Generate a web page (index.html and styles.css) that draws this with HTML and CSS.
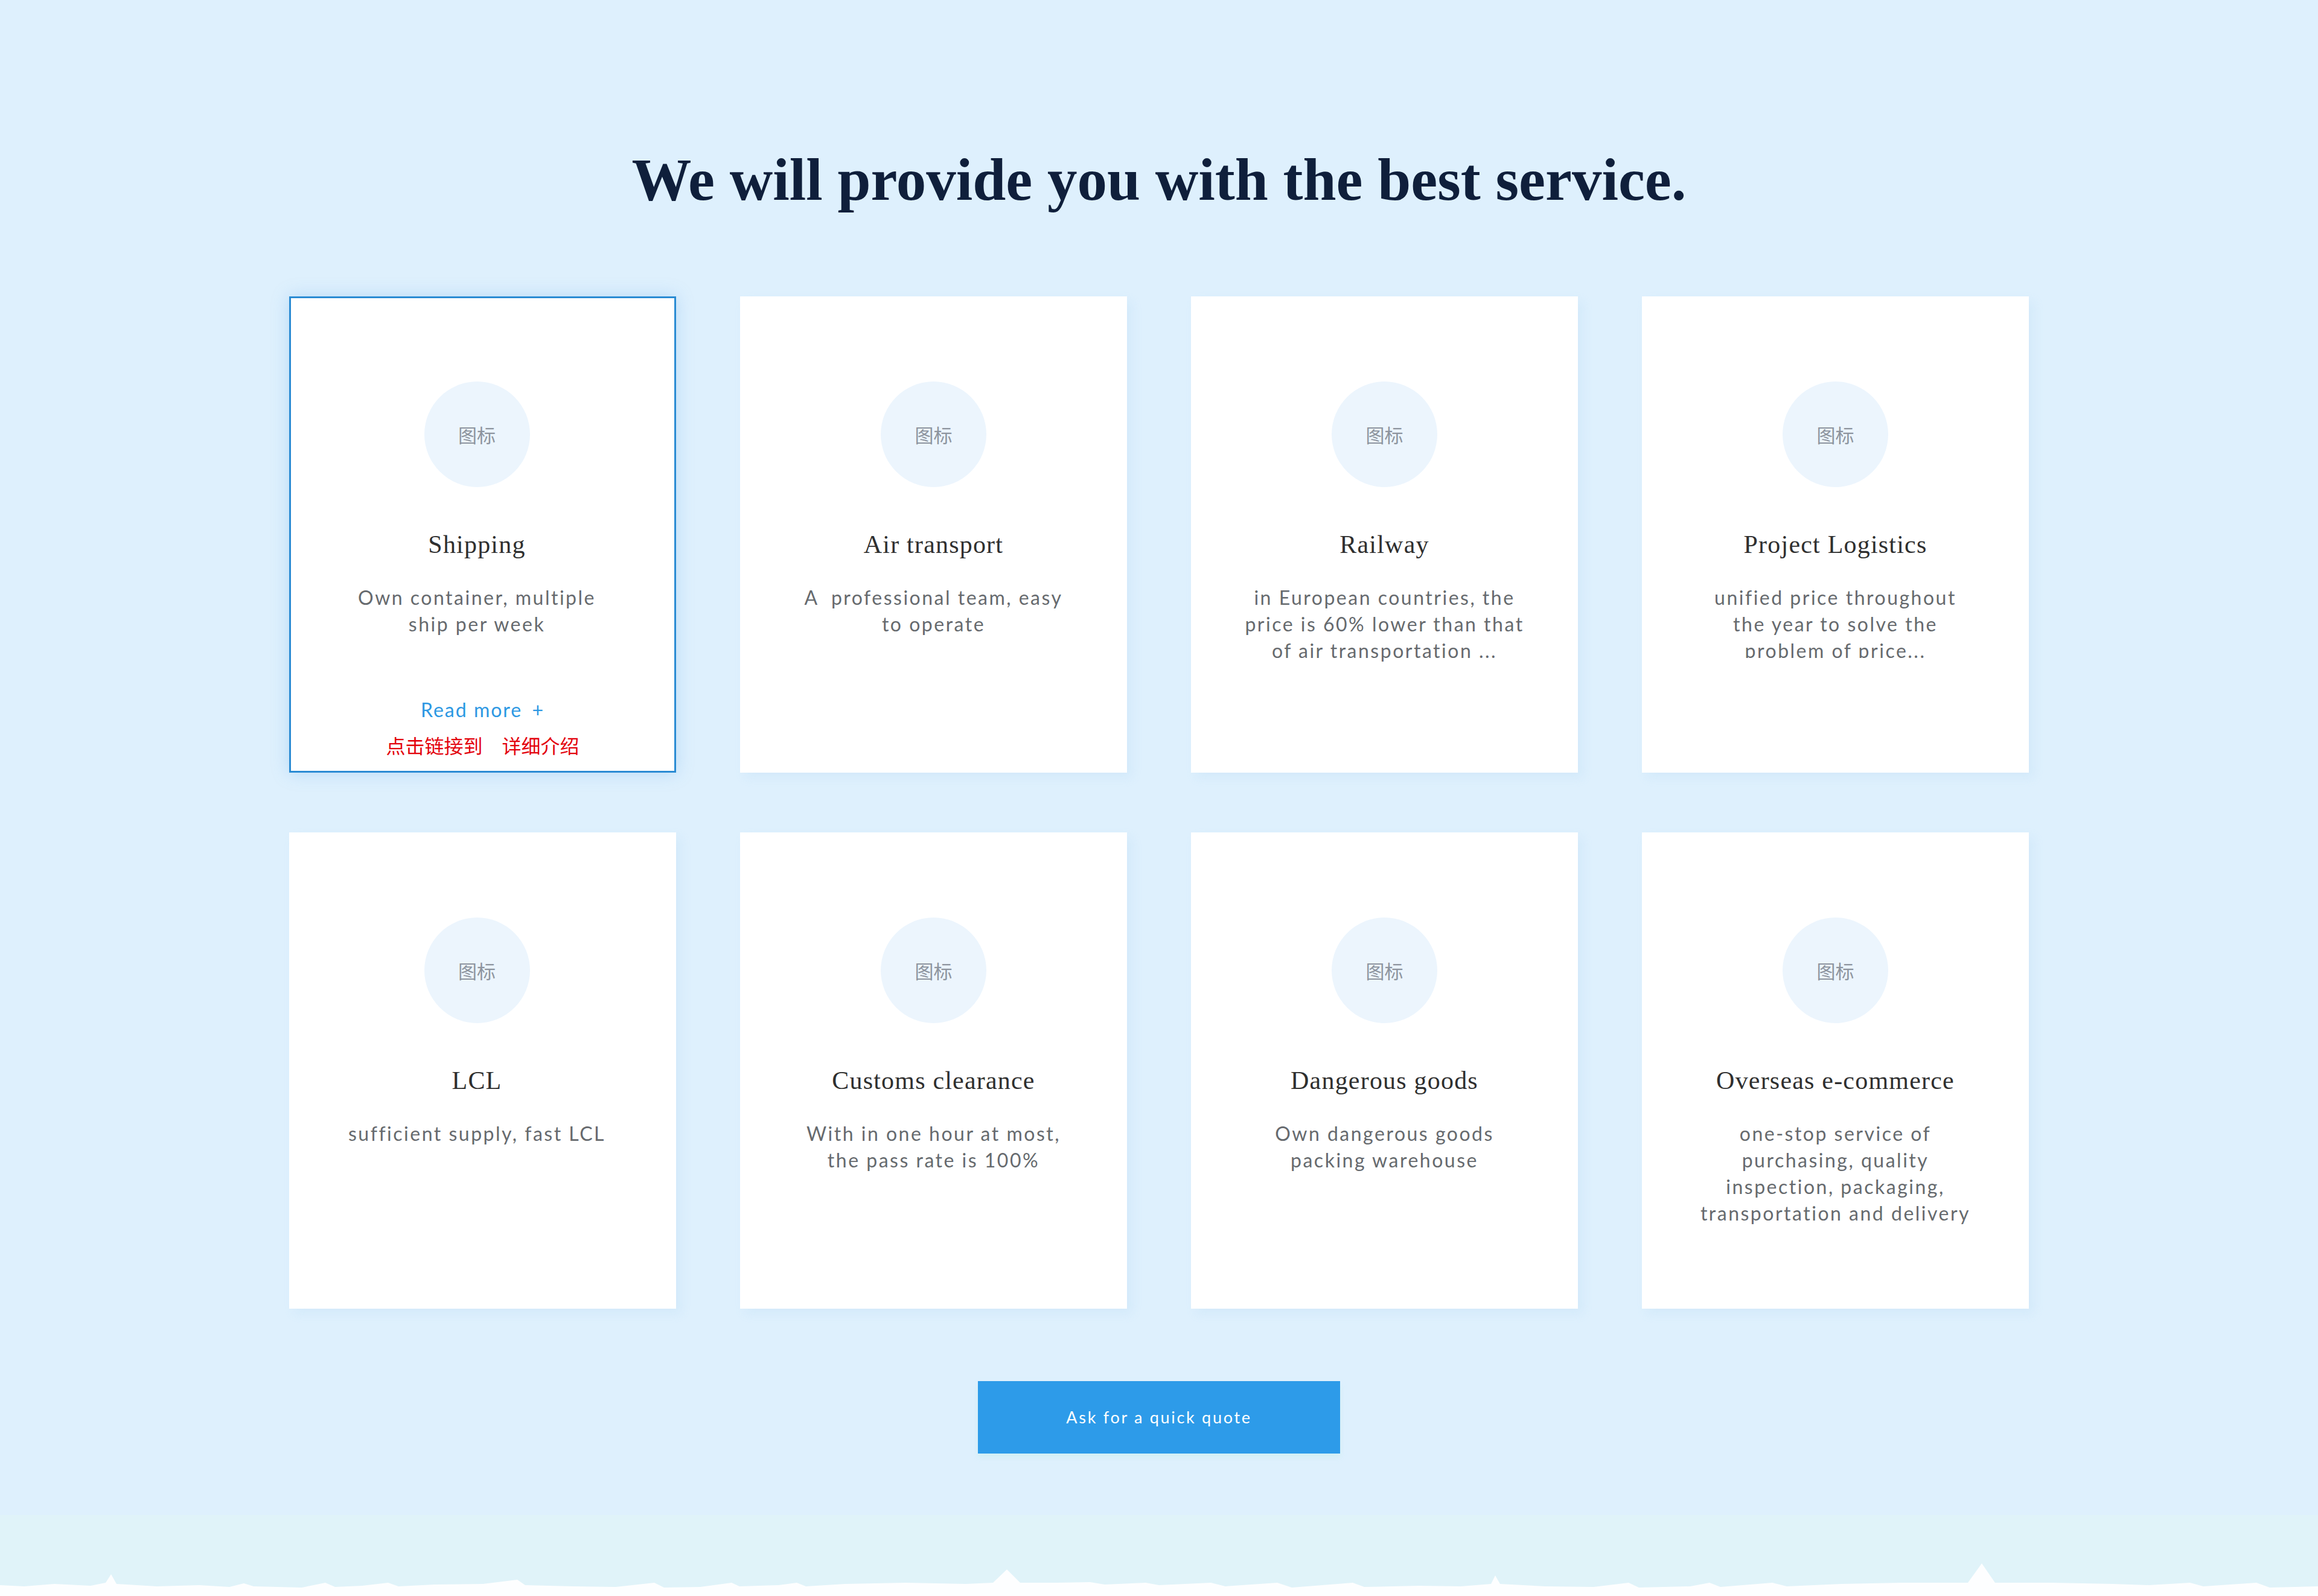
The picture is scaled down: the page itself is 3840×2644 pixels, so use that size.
FILE: index.html
```html
<!DOCTYPE html>
<html lang="en">
<head>
<meta charset="utf-8">
<title>Services</title>
<link rel="stylesheet" href="styles.css">
</head>
<body>
<main class="page">
  <section class="services">
    <h2 class="services-title">We will provide you with the best service.</h2>
    <div class="grid">
      <article class="card card--active">
        <div class="card-body">
          <div class="icon"><span>图标</span></div>
          <h3 class="card-title">Shipping</h3>
          <p class="card-desc">Own container, multiple ship per week</p>
        </div>
        <div class="card-more">
          <a class="read-more" href="#">Read more <span class="plus">+</span></a>
          <p class="card-note">点击链接到　详细介绍</p>
        </div>
      </article>
      <article class="card">
        <div class="card-body">
          <div class="icon"><span>图标</span></div>
          <h3 class="card-title">Air transport</h3>
          <p class="card-desc">A&nbsp; professional team, easy to operate</p>
        </div>
      </article>
      <article class="card">
        <div class="card-body">
          <div class="icon"><span>图标</span></div>
          <h3 class="card-title">Railway</h3>
          <p class="card-desc card-desc--wide">in European countries, the price is 60% lower than that of air transportation ...</p>
        </div>
      </article>
      <article class="card">
        <div class="card-body">
          <div class="icon"><span>图标</span></div>
          <h3 class="card-title">Project Logistics</h3>
          <p class="card-desc card-desc--clip">unified price throughout the year to solve the problem of price...</p>
        </div>
      </article>
      <article class="card">
        <div class="card-body">
          <div class="icon"><span>图标</span></div>
          <h3 class="card-title">LCL</h3>
          <p class="card-desc">sufficient supply, fast LCL</p>
        </div>
      </article>
      <article class="card">
        <div class="card-body">
          <div class="icon"><span>图标</span></div>
          <h3 class="card-title">Customs clearance</h3>
          <p class="card-desc">With in one hour at most, the pass rate is 100%</p>
        </div>
      </article>
      <article class="card">
        <div class="card-body">
          <div class="icon"><span>图标</span></div>
          <h3 class="card-title">Dangerous goods</h3>
          <p class="card-desc">Own dangerous goods packing warehouse</p>
        </div>
      </article>
      <article class="card">
        <div class="card-body">
          <div class="icon"><span>图标</span></div>
          <h3 class="card-title">Overseas e-commerce</h3>
          <p class="card-desc">one-stop service of purchasing, quality inspection, packaging, transportation and delivery</p>
        </div>
      </article>
    </div>
    <a class="quote-btn" href="#">Ask for a quick quote</a>
  </section>
  <footer class="band">
    <svg class="band-edge" viewBox="0 0 3840 60" preserveAspectRatio="none" aria-hidden="true">
      <polygon fill="#fdfeff" points="0,60 0,42 40,44 90,40 150,43 175,38 184,24 193,40 260,44 330,42 380,45 404,39 420,44 500,46 539,38 555,45 600,43 643,38 660,44 720,41 800,40 857,33 870,42 950,44 1020,45 1084,38 1100,46 1160,45 1212,38 1225,44 1290,42 1320,38 1335,44 1400,40 1500,38 1600,40 1645,38 1668,16 1690,38 1750,38 1806,37 1830,41 1898,38 1920,42 2006,38 2030,44 2116,38 2140,46 2241,38 2260,45 2350,43 2420,44 2470,40 2477,26 2485,40 2560,44 2640,45 2698,38 2715,46 2800,44 2832,38 2850,45 2936,38 2960,44 3050,40 3150,38 3260,38 3283,6 3305,38 3400,38 3500,40 3560,42 3628,38 3650,44 3738,38 3760,46 3840,44 3840,60"/>
    </svg>
  </footer>
</main>
</body>
</html>
```

FILE: styles.css
```css
html, body {
  margin: 0;
  padding: 0;
  overflow: hidden;
}

body {
  background: #def0fd;
  font-family: Lato, "Noto Sans", sans-serif;
}

.page {
  display: flex;
  flex-direction: column;
  min-height: 2644px;
}

.services {
  display: flex;
  flex-direction: column;
  align-items: center;
  padding-top: 239px;
}

.services-title {
  margin: 0;
  font-family: "Liberation Serif", "Times New Roman", serif;
  font-weight: 700;
  font-size: 99px;
  line-height: 1.2;
  color: #0f1f3b;
  text-align: center;
}

.grid {
  margin-top: 133px;
  display: grid;
  grid-template-columns: repeat(4, 641px);
  grid-auto-rows: 789px;
  column-gap: 106px;
  row-gap: 99px;
  justify-content: center;
}

.card {
  box-sizing: border-box;
  background: #ffffff;
  border: 3px solid transparent;
  display: flex;
  flex-direction: column;
  align-items: center;
  padding-top: 138px;
  padding-bottom: 24px;
  box-shadow: 8px 8px 16px rgba(150, 195, 235, 0.14);
}

.card--active {
  border-color: #2a8bd3;
  box-shadow: 0 0 26px rgba(110, 175, 235, 0.35);
}

.card-body {
  display: flex;
  flex-direction: column;
  align-items: center;
  width: 100%;
  box-sizing: border-box;
}

.card:nth-child(4n+1) .card-body {
  padding-right: 19px;
}

.icon {
  width: 175px;
  height: 175px;
  border-radius: 50%;
  background: #ecf5fd;
  display: flex;
  align-items: center;
  justify-content: center;
  font-family: "Noto Sans CJK SC", sans-serif;
  font-size: 31px;
  color: #8d949e;
}

.card-title {
  margin: 70px 0 0;
  font-family: "Liberation Serif", "Times New Roman", serif;
  font-weight: 400;
  font-size: 42px;
  line-height: 1.2;
  letter-spacing: 1.2px;
  color: #2f2f2f;
  text-align: center;
}

.card-desc {
  margin: 41px 0 0;
  width: 460px;
  font-size: 32px;
  line-height: 44px;
  letter-spacing: 2.5px;
  color: #666a6e;
  text-align: center;
}

.card-desc--wide {
  width: 480px;
}

.card-desc--clip {
  max-height: 122px;
  overflow: hidden;
}

.card-more {
  margin-top: auto;
  display: flex;
  flex-direction: column;
  align-items: center;
  gap: 19px;
}

.read-more {
  font-size: 32px;
  line-height: 1.2;
  letter-spacing: 2px;
  color: #2d98e3;
  text-decoration: none;
}

.plus {
  margin-left: 6px;
}

.card-note {
  margin: 0;
  font-family: "Noto Sans CJK SC", sans-serif;
  font-size: 32px;
  line-height: 38px;
  color: #e3000b;
}

.quote-btn {
  margin-top: 120px;
  width: 600px;
  height: 120px;
  display: flex;
  align-items: center;
  justify-content: center;
  background: #2d9be9;
  color: #ffffff;
  font-size: 27px;
  letter-spacing: 2.7px;
  text-decoration: none;
  box-shadow: 0 6px 8px rgba(200, 240, 240, 0.6);
}

.band {
  margin-top: auto;
  height: 134px;
  background: #e0f3f9;
  display: flex;
  flex-direction: column;
  justify-content: flex-end;
}

.band-edge {
  display: block;
  width: 100%;
  height: 60px;
}
```
